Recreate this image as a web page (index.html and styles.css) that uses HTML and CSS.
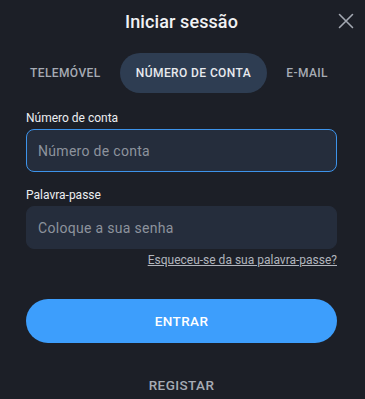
FILE: index.html
```html
<!DOCTYPE html>
<html lang="pt">
<head>
<meta charset="utf-8">
<link rel="stylesheet" href="styles.css">
</head>
<body>
<div class="modal">
  <header class="head">
    <h1 class="title">Iniciar sessão</h1>
    <button class="close" aria-label="Fechar">
      <svg width="16" height="16" viewBox="0 0 16 16"><path d="M1.5 1.5L14.5 14.5M14.5 1.5L1.5 14.5" stroke="#a3a8b2" stroke-width="1.6" stroke-linecap="round"/></svg>
    </button>
  </header>
  <nav class="tabs">
    <span class="tab">TELEMÓVEL</span>
    <span class="tab active">NÚMERO DE CONTA</span>
    <span class="tab">E-MAIL</span>
  </nav>
  <form class="form">
    <label class="label">Número de conta</label>
    <div class="input focus">Número de conta</div>
    <label class="label second">Palavra-passe</label>
    <div class="input">Coloque a sua senha</div>
    <a class="forgot">Esqueceu-se da sua palavra-passe?</a>
    <div class="btn">ENTRAR</div>
    <div class="register">REGISTAR</div>
  </form>
</div>
</body>
</html>
```
FILE: styles.css
```css
* { box-sizing: border-box; }
html, body { margin: 0; padding: 0; }
body {
  background: #1c1f27;
  font-family: Roboto, "Liberation Sans", sans-serif;
  width: 365px;
  height: 399px;
  overflow: hidden;
}
.modal { padding: 0 28px 0 26px; }
.head {
  height: 42px;
  display: flex;
  align-items: center;
  justify-content: center;
  position: relative;
}
.title {
  margin: 0;
  font-size: 18px;
  font-weight: 500;
  color: #f1f2f4;
  letter-spacing: 0.1px;
}
.close {
  position: absolute;
  right: -17px;
  top: 13px;
  background: none;
  border: 0;
  padding: 0;
  width: 16px;
  height: 16px;
  display: flex;
}
.tabs {
  margin-top: 11px;
  display: flex;
  align-items: center;
  justify-content: space-between;
  padding: 0 9px 0 4px;
}
.tab {
  font-size: 12px;
  font-weight: 500;
  color: #a6abb4;
  letter-spacing: 0.4px;
}
.tab.active {
  background: #2e3d52;
  color: #e8eaee;
  height: 40px;
  border-radius: 20px;
  padding: 0 16px;
  display: flex;
  align-items: center;
}
.form { display: flex; flex-direction: column; margin-top: 18px; }
.label {
  font-size: 12px;
  color: #eceef1;
  line-height: 14px;
  margin-bottom: 4px;
}
.label.second { margin-top: 16px; }
.input {
  height: 43px;
  border-radius: 8px;
  background: #252d3c;
  border: 1px solid #252d3c;
  color: #8d939d;
  font-size: 14px;
  letter-spacing: 0.3px;
  display: flex;
  align-items: center;
  padding-left: 11px;
}
.input.focus { border-color: #3d93ea; }
.forgot {
  align-self: flex-end;
  margin-top: 4px;
  font-size: 12px;
  color: #b1b5bd;
  text-decoration: underline;
  line-height: 14px;
}
.btn {
  margin-top: 32px;
  height: 44px;
  border-radius: 22px;
  background: #3d9efc;
  color: #ffffff;
  font-size: 13.5px;
  font-weight: 500;
  letter-spacing: 0.4px;
  display: flex;
  align-items: center;
  justify-content: center;
}
.register {
  margin-top: 34px;
  text-align: center;
  font-size: 13.5px;
  line-height: 16px;
  font-weight: 500;
  color: #a6abb4;
  letter-spacing: 0.4px;
}
```
